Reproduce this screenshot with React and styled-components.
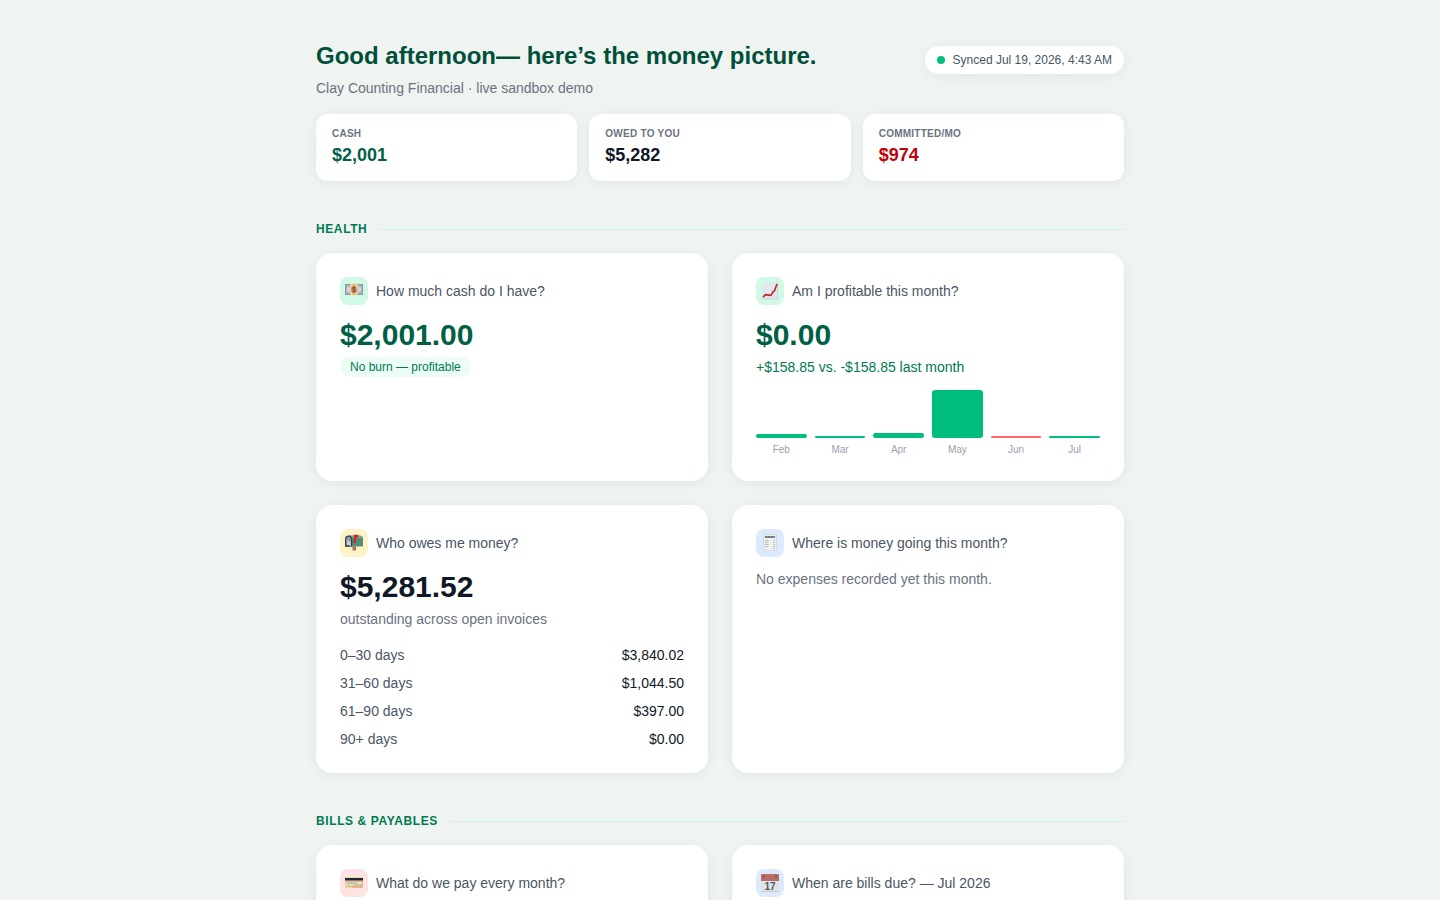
import React from "react";
import styled, { createGlobalStyle } from "styled-components";

const GlobalStyle = createGlobalStyle`
  :root{
    --color-bg: #eff4f0;
    --color-white: #ffffff;
    --color-text: #101828;
    --color-text-soft: #4a5565;
    --color-gray: #6a7282;
    --color-gray-light: #99a1af;
    --color-line: #d0f2e3;
    --color-green: #00bc7d;
    --color-green-text: #007a55;
    --color-green-dark: #006045;
    --color-green-darkest: #004f3b;
    --color-red: #ff6467;
    --color-red-dark: #c10007;
    --shadow: 0 2px 12px rgba(0, 96, 80, 0.07);
  }
  *{
    box-sizing: border-box;
    margin: 0;
    padding: 0;
  }
  body{
    background: var(--color-bg);
    color: var(--color-text);
    font-family: "Liberation Sans", Arial, sans-serif;
    font-size: 14px;
    line-height: 20px;
  }
`;

const Page = styled.main`
  width: 100%;
  max-width: 856px;
  margin: 0 auto;
  padding: 40px 24px;
`;
const Header = styled.header`
  display: flex;
  align-items: flex-start;
  justify-content: space-between;
  gap: 16px;
`;
const Title = styled.h1`
  font-size: 24px;
  font-weight: 700;
  line-height: 32px;
  color: var(--color-green-darkest);
`;
const Subtitle = styled.p`
  margin-top: 6px;
  color: var(--color-gray);
`;
const SyncBadge = styled.div`
  display: flex;
  align-items: center;
  gap: 8px;
  margin-top: 6px;
  padding: 6px 12px;
  border-radius: 14px;
  background: var(--color-white);
  box-shadow: var(--shadow);
  color: var(--color-text-soft);
  font-size: 12px;
  line-height: 16px;
  white-space: nowrap;
  &::before{
    content: "";
    width: 8px;
    height: 8px;
    border-radius: 50%;
    background: var(--color-green);
  }
`;
const Stats = styled.div`
  display: grid;
  grid-template-columns: repeat(3, 1fr);
  gap: 12px;
  margin-top: 16px;
`;
const Stat = styled.div`
  padding: 12px 16px;
  border-radius: 12px;
  background: var(--color-white);
  box-shadow: var(--shadow);
`;
const StatLabel = styled.p`
  font-size: 10px;
  font-weight: 700;
  line-height: 15px;
  letter-spacing: 0.025em;
  text-transform: uppercase;
  color: var(--color-gray);
`;
const StatValue = styled.p`
  font-size: 18px;
  font-weight: 700;
  line-height: 28px;
  color: ${({ $color }) => $color};
`;
const Section = styled.section`
  margin-top: 40px;
`;
const SectionTitle = styled.h2`
  display: flex;
  align-items: center;
  gap: 12px;
  margin-bottom: 16px;
  font-size: 12px;
  font-weight: 700;
  line-height: 16px;
  letter-spacing: 0.05em;
  text-transform: uppercase;
  color: var(--color-green-text);
  &::after{
    content: "";
    flex: 1;
    height: 1px;
    background: var(--color-line);
  }
`;
const Cards = styled.div`
  display: grid;
  grid-template-columns: repeat(2, 1fr);
  gap: 24px;
`;
const CardElement = styled.article`
  padding: 24px;
  border-radius: 16px;
  background: var(--color-white);
  box-shadow: var(--shadow);
`;
const CardHeader = styled.div`
  display: flex;
  align-items: center;
  gap: 8px;
  margin-bottom: 12px;
`;
const CardIcon = styled.span`
  display: flex;
  align-items: center;
  justify-content: center;
  width: 28px;
  height: 28px;
  border-radius: 8px;
  background: ${({ $bg }) => $bg};
`;
const CardTitle = styled.h3`
  font-size: 14px;
  font-weight: 400;
  color: var(--color-text-soft);
`;
const Amount = styled.p`
  margin-bottom: 4px;
  font-size: 30px;
  font-weight: 700;
  line-height: 36px;
  color: ${({ $green }) => $green ? "var(--color-green-dark)" : "var(--color-text)"};
`;
const Note = styled.p`
  color: ${({ $green }) => $green ? "var(--color-green-text)" : "var(--color-gray)"};
`;
const Tag = styled.span`
  display: block;
  width: fit-content;
  padding: 2px 10px;
  border-radius: 10px;
  background: #ecfdf5;
  color: var(--color-green-text);
  font-size: 12px;
  line-height: 16px;
`;
const Chart = styled.div`
  display: grid;
  grid-template-columns: repeat(6, 1fr);
  gap: 8px;
  margin-top: 12px;
`;
const Month = styled.div`
  display: flex;
  flex-flow: column;
  justify-content: flex-end;
  gap: 4px;
  height: 68px;
  font-size: 10px;
  line-height: 15px;
  text-align: center;
  color: var(--color-gray-light);
`;
const Bar = styled.div`
  border-radius: 3px;
  background: ${({ $loss }) => $loss ? "var(--color-red)" : "var(--color-green)"};
`;
const Aging = styled.table`
  width: 100%;
  margin-top: 16px;
  border-collapse: collapse;
  th{
    padding-bottom: 8px;
    font-weight: 400;
    text-align: left;
    color: var(--color-text-soft);
  }
  td{
    padding-bottom: 8px;
    text-align: right;
  }
  tr:last-child > *{
    padding-bottom: 0;
  }
`;

function Icon ({children}) {
  return(
    <svg width="18" height="18" viewBox="0 0 18 18" aria-hidden="true">{children}</svg>
  );
}

const icons = {
  cash: <Icon>
    <rect x="0" y="2" width="18" height="11" rx="0.5" fill="#8f93a2" />
    <rect x="1.2" y="3.2" width="15.6" height="8.6" fill="#b4b8c3" />
    <circle cx="4" cy="7.5" r="2.4" fill="#d3d6dc" />
    <circle cx="14" cy="7.5" r="2.4" fill="#d3d6dc" />
    <rect x="5.5" y="1.8" width="7" height="11.4" fill="#e3bd82" />
    <path d="M5.5 1.8h1.4v11.4H5.5zM11 1.8h1.5v11.4H11z" fill="#f4dca8" />
    <circle cx="9" cy="7.5" r="3.2" fill="#cf9868" />
    <path d="M10.7 5.8C9.9 4.7 7.4 4.9 7.4 6.3c0 1.6 3.4.8 3.4 2.4 0 1.4-2.7 1.6-3.6.4M9 4.2v6.6" fill="none" stroke="#84452f" strokeWidth="0.9" />
  </Icon>,
  chart: <Icon>
    <rect x="1.5" y="0.5" width="15.5" height="16.5" fill="#e1e7ed" />
    <path d="M1.5 16.8H17M16.7.5V17" stroke="#c3cbd1" strokeWidth="0.7" />
    <path d="M2 15.2 4.3 12.6l5.6.8 2.3-3.6 1.4-1.2L16 2" fill="none" stroke="#c3222a" strokeWidth="1.6" strokeLinejoin="round" />
  </Icon>,
  mailbox: <Icon>
    <path d="M7.5 12.5h3.6v4H7.5z" fill="#a96f57" />
    <path d="M4 1.5h10.5A3.5 3.5 0 0 1 18 5v7.5H5z" fill="#568d79" />
    <path d="M6 2h9a3 3 0 0 1 2.2 2H6z" fill="#80aa98" />
    <path d="M0 12.5V5a3.6 3.6 0 0 1 7.2 0v7.5z" fill="#32434e" />
    <path d="M1.2 12V5.2a2.4 2.4 0 0 1 4.8 0V12z" fill="#8d9ba8" />
    <path d="M2 12V6.2L5.5 8v4z" fill="#c5ced6" />
    <path d="M.2 12.8h5l-1-1.5H.2z" fill="#33404c" />
    <path d="M8.8 9V.8h4.6v2.6H11V9z" fill="#da2229" />
  </Icon>,
  receipt: <Icon>
    <path d="M2.5.5h13v16.2l-1.3-.6-1.3.9-1.3-.9-1.3.9-1.3-.9-1.3.9-1.3-.9-1.3.9-1.3-.9-1.3.6z" fill="#eef1ee" stroke="#c0c9cf" strokeWidth="0.5" />
    <path d="M4 2.9h10" stroke="#6b7783" strokeWidth="2" strokeDasharray="2.6 .2" />
    <path d="M3.8 6.5h4M3.8 8.5h3.5M3.8 10.5h4M3.8 12.5h3.5M12.2 6.5h1.9M12.2 8.5h1.9M12.2 10.5h1.9M12.2 12.5h1.9M11.6 14.5h2.5" stroke="#a0a9b0" strokeWidth="0.7" />
  </Icon>,
  card: <Icon>
    <rect x="0" y="3" width="18" height="11" rx="0.8" fill="#d9b98d" />
    <path d="M.5 3h17v3H.5zM0 8h11L6 14H.5z" fill="#eddaae" />
    <rect x="0" y="4" width="18" height="2.4" fill="#202633" />
    <rect x="1.5" y="8" width="11" height="2.3" fill="#d4d3cb" />
    <path d="M2 9.2h9.5" stroke="#9ba5aa" strokeWidth="0.8" strokeDasharray="1.5 .5" />
    <rect x="13" y="8" width="3.4" height="2.3" fill="#f0e5ca" />
    <path d="M1.2 12.3h5" stroke="#b6a173" strokeWidth="0.6" />
  </Icon>,
  calendar: <Icon>
    <rect x="0" y="0" width="18" height="18" rx="0.8" fill="#e1e2e1" />
    <path d="M0 7V.8Q0 0 .8 0h16.4q.8 0 .8.8V7z" fill="#b56d65" />
    <circle cx="3" cy="2.5" r="1" fill="#7c4342" />
    <circle cx="15" cy="2.5" r="1" fill="#7c4342" />
    <path d="M0 17.5h18" stroke="#bfc3c5" strokeWidth="0.8" />
    <text x="9" y="16" textAnchor="middle" fontSize="10" fontWeight="700" fill="#4b586b">17</text>
  </Icon>,
};

const stats = [
  { label: "Cash", value: "$2,001", color: "var(--color-green-dark)" },
  { label: "Owed to you", value: "$5,282", color: "var(--color-text)" },
  { label: "Committed/mo", value: "$974", color: "var(--color-red-dark)" },
];

const months = [
  { name: "Feb", height: 4 },
  { name: "Mar", height: 2 },
  { name: "Apr", height: 5 },
  { name: "May", height: 48 },
  { name: "Jun", height: 2, loss: true },
  { name: "Jul", height: 2 },
];

const aging = [
  ["0–30 days", "$3,840.02"],
  ["31–60 days", "$1,044.50"],
  ["61–90 days", "$397.00"],
  ["90+ days", "$0.00"],
];

function Card ({icon, bg, title, children}) {
  return(
    <CardElement>
      <CardHeader>
        <CardIcon $bg={bg}>{icons[icon]}</CardIcon>
        <CardTitle>{title}</CardTitle>
      </CardHeader>
      {children}
    </CardElement>
  );
}

function App () {
  return(
    <>
      <GlobalStyle />
      <Page>
        <Header>
          <div>
            <Title>Good afternoon— here’s the money picture.</Title>
            <Subtitle>Clay Counting Financial · live sandbox demo</Subtitle>
          </div>
          <SyncBadge>Synced Jul 19, 2026, 4:43 AM</SyncBadge>
        </Header>
        <Stats>
          {stats.map(({label, value, color}) => (
            <Stat key={label}>
              <StatLabel>{label}</StatLabel>
              <StatValue $color={color}>{value}</StatValue>
            </Stat>
          ))}
        </Stats>

        <Section>
          <SectionTitle>Health</SectionTitle>
          <Cards>
            <Card icon="cash" bg="#d0fae5" title="How much cash do I have?">
              <Amount $green>$2,001.00</Amount>
              <Tag>No burn — profitable</Tag>
            </Card>
            <Card icon="chart" bg="#d0fae5" title="Am I profitable this month?">
              <Amount $green>$0.00</Amount>
              <Note $green>+$158.85 vs. -$158.85 last month</Note>
              <Chart>
                {months.map(({name, height, loss}) => (
                  <Month key={name}>
                    <Bar $loss={loss} style={{height: height}} />
                    <span>{name}</span>
                  </Month>
                ))}
              </Chart>
            </Card>
            <Card icon="mailbox" bg="#fef3c6" title="Who owes me money?">
              <Amount>$5,281.52</Amount>
              <Note>outstanding across open invoices</Note>
              <Aging>
                <tbody>
                  {aging.map(([range, sum]) => (
                    <tr key={range}>
                      <th scope="row">{range}</th>
                      <td>{sum}</td>
                    </tr>
                  ))}
                </tbody>
              </Aging>
            </Card>
            <Card icon="receipt" bg="#dbeafe" title="Where is money going this month?">
              <Note>No expenses recorded yet this month.</Note>
            </Card>
          </Cards>
        </Section>

        <Section>
          <SectionTitle>Bills &amp; Payables</SectionTitle>
          <Cards>
            <Card icon="card" bg="#ffe2e2" title="What do we pay every month?" />
            <Card icon="calendar" bg="#dbeafe" title="When are bills due? — Jul 2026" />
          </Cards>
        </Section>
      </Page>
    </>
  );
}

export default App;
